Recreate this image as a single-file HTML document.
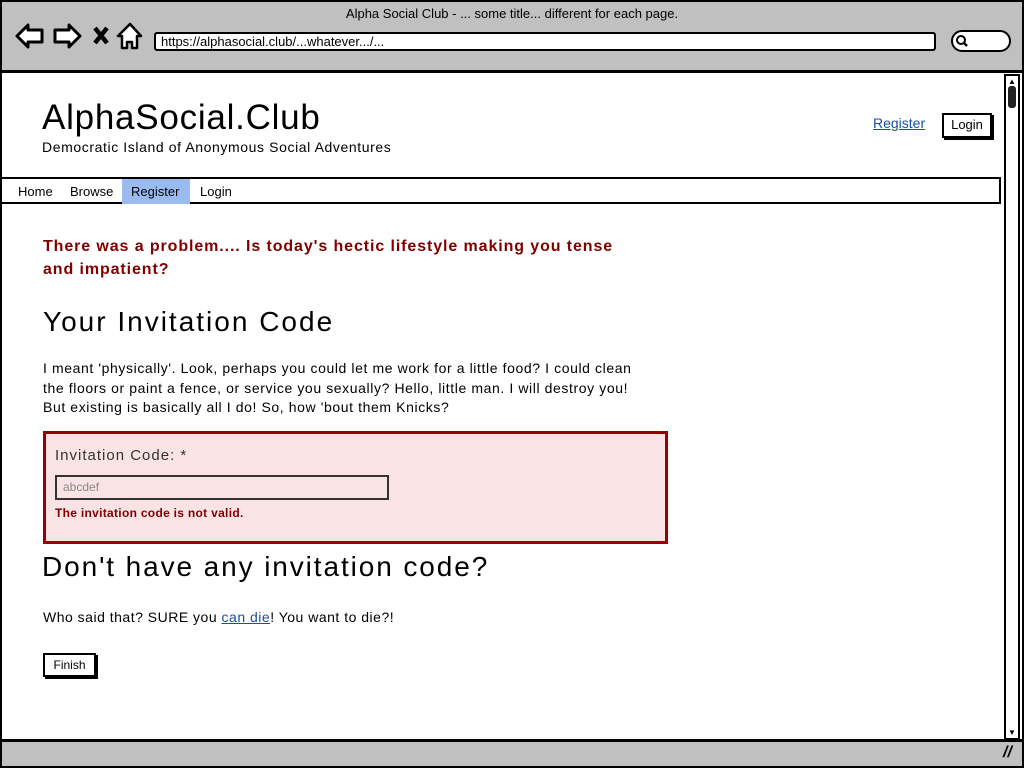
<!DOCTYPE html>
<html><head><meta charset="utf-8"><style>
*{margin:0;padding:0;box-sizing:border-box}
body{width:1024px;height:768px;position:relative;overflow:hidden;background:#fff;font-family:"Liberation Sans",sans-serif;color:#000}
.a{position:absolute;white-space:nowrap}
</style></head><body>
<div class="a" style="left:0;top:0;width:1024px;height:768px;border:2px solid #000;background:#fff"></div>
<div class="a" style="left:0;top:0;width:1024px;height:73px;background:#c0c0c0;border:2px solid #000;border-bottom:3px solid #000"></div>
<div class="a" style="left:0;top:6px;width:1024px;text-align:center;font-size:13px">Alpha Social Club - ... some title... different for each page.</div>
<svg class="a" style="left:14px;top:22px" width="132" height="30" viewBox="0 0 132 30">
<path d="M3 14 L14 3 L14 8 L28 8 L28 20 L14 20 L14 25 Z" fill="#fff" stroke="#000" stroke-width="3" stroke-linejoin="round"/>
<path d="M66 14 L55 3 L55 8 L41 8 L41 20 L55 20 L55 25 Z" fill="#fff" stroke="#000" stroke-width="3" stroke-linejoin="round"/>
<path d="M81 6 L93 21 M93 6 L81 21" stroke="#000" stroke-width="4.5"/>
<path d="M116 2 L104 14 L108 14 L108 26 L113 26 L113 20 L118 20 L118 26 L123 26 L123 14 L127 14 Z" fill="#fff" stroke="#000" stroke-width="2.5" stroke-linejoin="round"/>
</svg>
<div class="a" style="left:154px;top:32px;width:782px;height:19px;background:#fff;border:2px solid #000;border-radius:3px;font-size:13px;padding-left:5px;line-height:15px">https://alphasocial.club/...whatever.../...</div>
<div class="a" style="left:951px;top:30px;width:60px;height:22px;background:#fff;border:2px solid #000;border-radius:12px"></div>
<svg class="a" style="left:955px;top:34px" width="14" height="14"><circle cx="6" cy="6" r="4" fill="none" stroke="#000" stroke-width="2"/><path d="M9 9 L12 12" stroke="#000" stroke-width="2.5"/></svg>
<div class="a" style="left:1004px;top:74px;width:16px;height:666px;border:2px solid #000;background:#fff"></div>
<div class="a" style="left:1008px;top:86px;width:8px;height:22px;background:#222;border-radius:3px"></div>
<div class="a" style="left:1008px;top:77px;font-size:8px">▲</div>
<div class="a" style="left:1008px;top:728px;font-size:8px">▼</div>
<div class="a" style="left:0;top:739px;width:1024px;height:29px;background:#c0c0c0;border:2px solid #000;border-top:3px solid #000"></div>
<div class="a" style="left:1003px;top:744px;font-size:16px;font-style:italic;font-weight:bold">//</div>

<div class="a" style="left:42px;top:98px;font-size:35px;letter-spacing:0.75px">AlphaSocial.Club</div>
<div class="a" style="left:42px;top:139px;font-size:14px;letter-spacing:0.6px">Democratic Island of Anonymous Social Adventures</div>
<div class="a" style="left:873px;top:115px;font-size:14px;color:#1a4f9c;text-decoration:underline">Register</div>
<div class="a" style="left:942px;top:113px;width:50px;height:25px;border:2px solid #000;box-shadow:2px 2px 0 #000;font-size:13px;text-align:center;line-height:20px;background:#fff">Login</div>

<div class="a" style="left:0;top:177px;width:1001px;height:27px;border:2px solid #000;border-left:none"></div>
<div class="a" style="left:122px;top:179px;width:68px;height:25px;background:#99bbf0"></div>
<div class="a" style="left:18px;top:184px;font-size:13px">Home</div>
<div class="a" style="left:70px;top:184px;font-size:13px">Browse</div>
<div class="a" style="left:131px;top:184px;font-size:13px">Register</div>
<div class="a" style="left:200px;top:184px;font-size:13px">Login</div>

<div class="a" style="left:43px;top:235px;font-size:16px;font-weight:bold;color:#800000;line-height:23px;letter-spacing:0.9px">There was a problem.... Is today's hectic lifestyle making you tense<br>and impatient?</div>
<div class="a" style="left:43px;top:306px;font-size:28px;letter-spacing:2px">Your Invitation Code</div>
<div class="a" style="left:43px;top:359px;font-size:14px;line-height:19.5px;letter-spacing:0.6px">I meant 'physically'. Look, perhaps you could let me work for a little food? I could clean<br>the floors or paint a fence, or service you sexually? Hello, little man. I will destroy you!<br>But existing is basically all I do! So, how 'bout them Knicks?</div>
<div class="a" style="left:43px;top:431px;width:625px;height:113px;background:#f9e3e5;border:3px solid #990000"></div>
<div class="a" style="left:55px;top:447px;font-size:15px;color:#333;letter-spacing:1px">Invitation Code: *</div>
<div class="a" style="left:55px;top:475px;width:334px;height:25px;border:2px solid #333;background:#f9e3e5;font-size:12px;color:#888;padding-left:6px;line-height:21px">abcdef</div>
<div class="a" style="left:55px;top:506px;font-size:12px;font-weight:bold;color:#800000;letter-spacing:0.3px">The invitation code is not valid.</div>
<div class="a" style="left:42px;top:551px;font-size:28px;letter-spacing:1.9px">Don't have any invitation code?</div>
<div class="a" style="left:43px;top:609px;font-size:14px;letter-spacing:0.5px">Who said that? SURE you <span style="color:#1a4f9c;text-decoration:underline">can die</span>! You want to die?!</div>
<div class="a" style="left:43px;top:653px;width:53px;height:24px;border:2px solid #000;box-shadow:2px 2px 0 #000;font-size:12px;text-align:center;line-height:20px;background:#fff">Finish</div>
</body></html>
